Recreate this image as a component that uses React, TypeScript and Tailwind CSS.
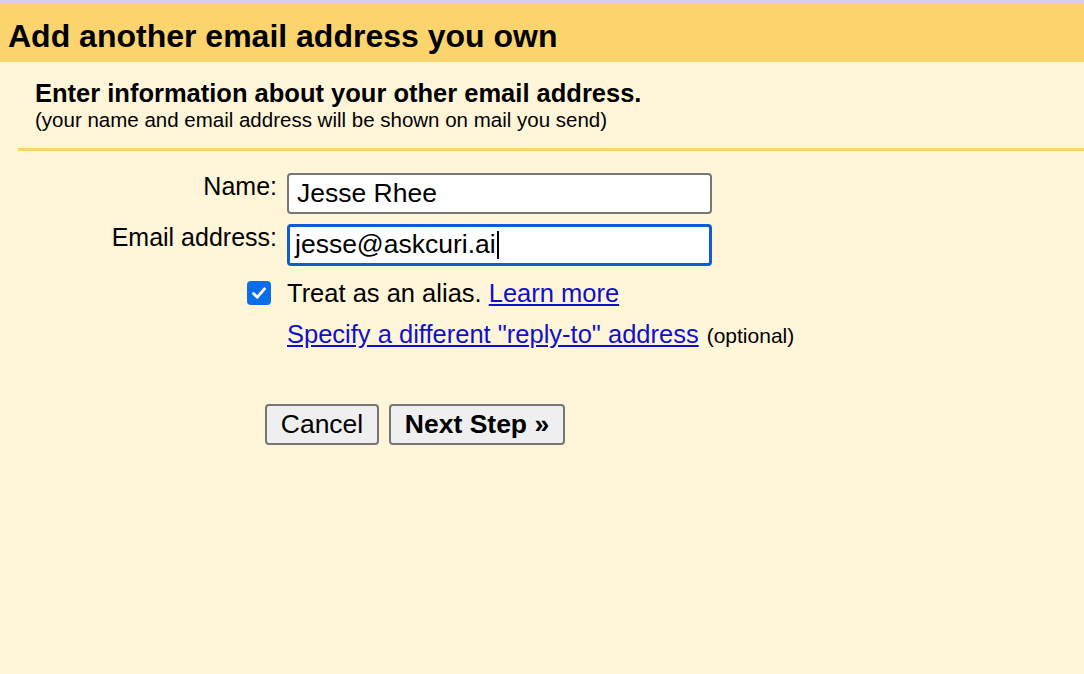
import React from "react";

export default function App() {
  return (
    <div
      className="w-[1084px] h-[674px] bg-[#fff6da] flex flex-col overflow-hidden text-black"
      style={{ fontFamily: '"Liberation Sans", Arial, sans-serif' }}
    >
      <div className="h-[3px] bg-[#d9cfe0]" />
      <div className="h-[59px] bg-[#fcd46e] flex items-start pl-[8px] pt-[17px]">
        <h1 className="text-[32px] font-bold leading-[32px]">Add another email address you own</h1>
      </div>
      <div className="pl-[35px] pt-[18px]">
        <div className="text-[25.5px] font-bold leading-[27px]">Enter information about your other email address.</div>
        <div className="text-[20.5px] leading-[22px] mt-[2px]">(your name and email address will be shown on mail you send)</div>
      </div>
      <div className="ml-[18px] mt-[17px] h-[3px] bg-[#fcd46e]" />
      <div className="flex flex-col pt-[22px]">
        <div className="flex items-start">
          <div className="w-[277px] text-right text-[25px] leading-[25px] pt-[1px]">Name:</div>
          <div className="ml-[10px] w-[425px] h-[41px] border-2 border-[#777] rounded-[4px] bg-white flex items-center pl-[8px] text-[26.5px]">
            Jesse Rhee
          </div>
        </div>
        <div className="flex items-start mt-[10px]">
          <div className="w-[277px] text-right text-[25px] leading-[25px] pt-[1px]">Email address:</div>
          <div className="ml-[10px] w-[425px] h-[42px] border-[3px] border-[#0b5fd0] rounded-[4px] bg-white flex items-center pl-[5px] text-[26.5px]">
            jesse@askcuri.ai<span className="inline-block w-[2px] h-[28px] bg-black ml-[1px]" />
          </div>
        </div>
        <div className="flex items-center mt-[14px] ml-[247px] h-[26px]">
          <div className="w-[24px] h-[24px] rounded-[4px] bg-[#0b6ee8] flex items-center justify-center">
            <svg width="18" height="18" viewBox="0 0 18 18">
              <path d="M3.5 9.5 L7.3 13.2 L14.5 4.8" fill="none" stroke="white" strokeWidth="2.8" strokeLinecap="round" strokeLinejoin="round" />
            </svg>
          </div>
          <div className="ml-[16px] text-[25.5px] leading-[26px]">
            Treat as an alias.{" "}
            <a href="#" className="text-[#0f0fcc] underline">Learn more</a>
          </div>
        </div>
        <div className="ml-[287px] mt-[15px] flex items-baseline leading-[26px]">
          <a href="#" className="text-[25.5px] text-[#0f0fcc] underline">Specify a different "reply-to" address</a>
          <span className="ml-[8px] text-[21px]">(optional)</span>
        </div>
        <div className="flex ml-[265px] mt-[55px] gap-[10px]">
          <button className="w-[114px] h-[41px] bg-[#efefef] border-2 border-[#767676] rounded-[4px] text-[26.5px] leading-none">Cancel</button>
          <button className="w-[176px] h-[41px] bg-[#efefef] border-2 border-[#767676] rounded-[4px] text-[26.5px] leading-none font-bold">Next Step »</button>
        </div>
      </div>
    </div>
  );
}
